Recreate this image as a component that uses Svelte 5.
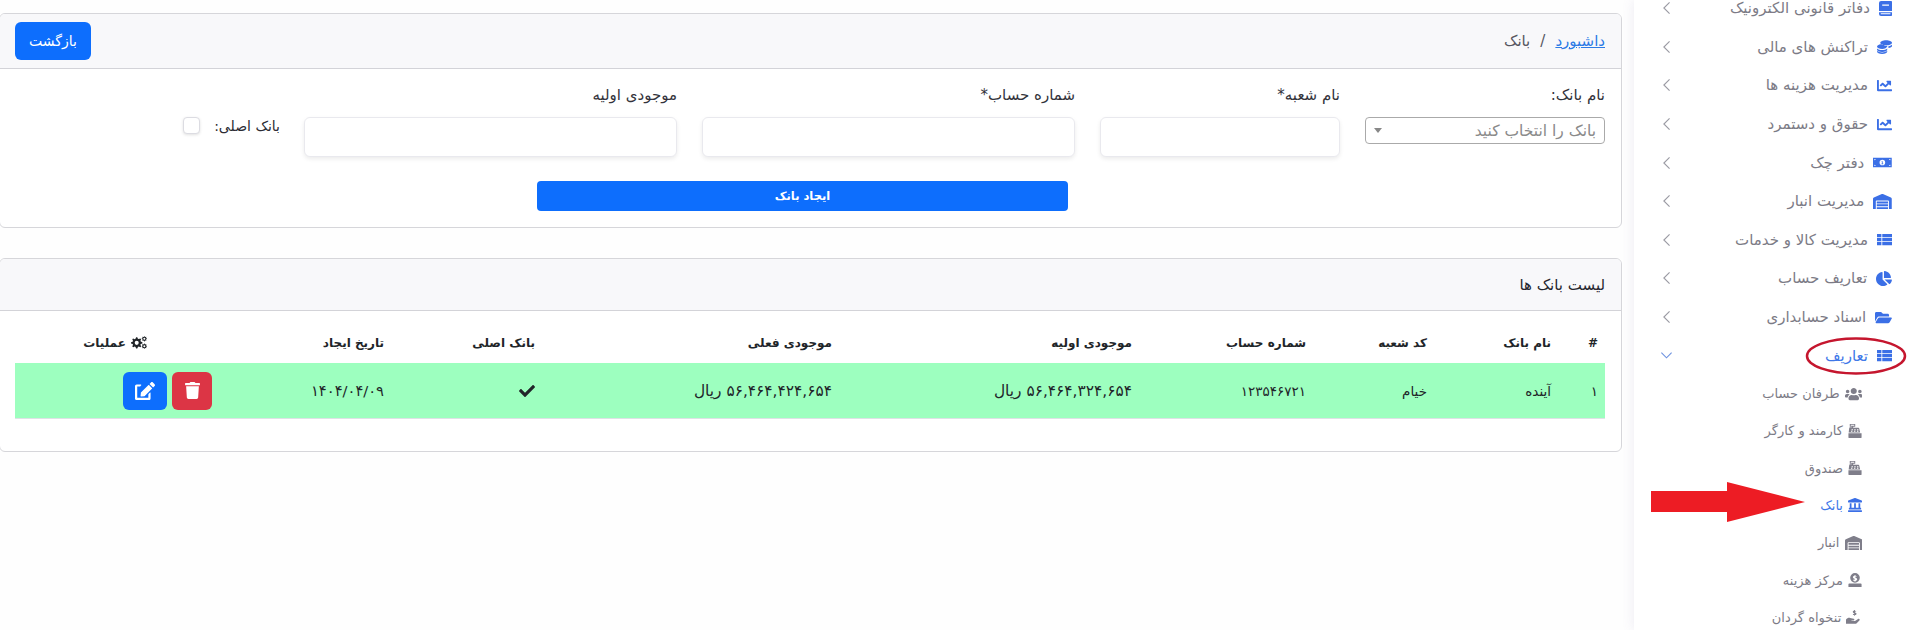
<script>
  const gear = (cx, cy, r, hole) => {
    let d = ''
    const n = 8
    for (let i = 0; i < n * 4; i++) {
      const a = (i / (n * 4)) * Math.PI * 2
      const rad = i % 4 < 2 ? r : r * 0.74
      d += (i ? 'L' : 'M') + (cx + rad * Math.cos(a - 0.1)).toFixed(1) + ' ' + (cy + rad * Math.sin(a - 0.1)).toFixed(1)
    }
    d += `zM${cx - hole} ${cy}a${hole} ${hole} 0 1 0 ${hole * 2} 0a${hole} ${hole} 0 1 0 ${-hole * 2} 0z`
    return d
  }

  const icons = {
    book: ['0 0 448 512', 'M72 0h344a32 32 0 0 1 32 32v448a32 32 0 0 1-32 32H72a72 72 0 0 1-72-72V72A72 72 0 0 1 72 0zM110 120v40h230v-40zM0 340v46h448v-46zM60 420v36h330v-36z'],
    coins: ['0 0 512 512', 'M512 130c0 50-90 90-200 90s-200-40-200-90 90-90 200-90 200 40 200 90zM0 260c0-45 70-82 170-90 40 50 120 76 200 70l-20 8c-10 50-90 92-170 92C80 340 0 305 0 260zM0 320c40 40 110 58 175 58s135-18 175-58v40c0 45-78 82-175 82S0 405 0 360zM0 400c40 40 110 58 175 58s135-18 175-58v30c0 45-78 82-175 82S0 475 0 430zM390 250c50-8 90-24 122-50v40c0 30-50 56-122 66z'],
    chart: ['0 0 512 512', 'M496 384H64V80c0-8.84-7.16-16-16-16H16C7.16 64 0 71.16 0 80v336c0 17.67 14.33 32 32 32h464c8.84 0 16-7.16 16-16v-32c0-8.84-7.16-16-16-16zM464 96H345.94c-21.38 0-32.09 25.85-16.97 40.97l32.4 32.4L288 242.75l-73.37-73.37c-12.5-12.5-32.76-12.5-45.25 0l-68.69 68.69c-6.25 6.25-6.25 16.38 0 22.63l22.62 22.62c6.25 6.25 16.38 6.25 22.63 0L192 237.25l73.37 73.37c12.5 12.5 32.76 12.5 45.25 0l96-96 32.4 32.4c15.12 15.12 40.97 4.41 40.97-16.97V112c0-8.84-7.16-16-16-16z'],
    money: ['0 0 640 512', 'M0 96h640v320H0zM48 140v40a40 40 0 0 0 40-40zM552 140a40 40 0 0 0 40 40v-40zM48 332v40h40a40 40 0 0 0-40-40zM592 332a40 40 0 0 0-40 40h40zM320 160a96 96 0 1 0 0 192 96 96 0 0 0 0-192zM300 210h30v80h20v24h-60v-24h14v-50h-14z'],
    warehouse: ['0 0 640 512', 'M504 352H136.4c-4.4 0-8 3.6-8 8l-.1 48c0 4.4 3.6 8 8 8H504c4.4 0 8-3.6 8-8v-48c0-4.4-3.6-8-8-8zm0 96H136.1c-4.4 0-8 3.6-8 8l-.1 48c0 4.4 3.6 8 8 8h368c4.4 0 8-3.6 8-8v-48c0-4.4-3.6-8-8-8zm0-192H136.6c-4.4 0-8 3.6-8 8l-.1 48c0 4.4 3.6 8 8 8H504c4.4 0 8-3.6 8-8v-48c0-4.4-3.6-8-8-8zm106.5-139L338.4 3.7a48.15 48.15 0 0 0-36.9 0L29.5 117C11.7 124.5 0 141.9 0 161.3V504c0 4.4 3.6 8 8 8h80c4.4 0 8-3.6 8-8V256c0-17.6 14.6-32 32.6-32h382.8c18 0 32.6 14.4 32.6 32v248c0 4.4 3.6 8 8 8h80c4.4 0 8-3.6 8-8V161.3c0-19.4-11.7-36.8-29.5-44.3z'],
    list: ['0 0 512 512', 'M0 64h150v110H0zM180 64h332v110H180zM0 200h150v112H0zM180 200h332v112H180zM0 338h150v110H0zM180 338h332v110H180z'],
    pie: ['0 0 544 512', 'M527.79 288H290.5l158.03 158.03c6.04 6.04 15.98 6.53 22.19 .68 38.7-36.46 65.32-85.61 73.13-140.86 1.34-9.46-6.51-17.85-16.06-17.85zm-15.83-64.8C503.72 103.74 408.26 8.28 288.8.04 279.68-.59 272 7.1 272 16.24V240h223.77c9.14 0 16.82-7.68 16.19-16.8zM224 288V50.71c0-9.55-8.39-17.4-17.84-16.06C86.99 51.49-4.1 155.6.14 280.37 4.5 408.51 114.83 513.59 243.03 511.98c50.4-.63 96.97-16.87 135.26-44.03 7.9-5.6 8.42-17.23 1.57-24.08L224 288z'],
    folder: ['0 0 576 512', 'M572.694 292.093L500.27 416.248A63.997 63.997 0 0 1 444.989 448H45.025c-18.523 0-30.064-20.093-20.731-36.093l72.424-124.155A64 64 0 0 1 152 256h399.964c18.523 0 30.064 20.093 20.73 36.093zM152 224h328v-48c0-26.51-21.49-48-48-48H272l-64-64H48C21.49 64 0 85.49 0 112v278.046l69.077-118.418C86.214 242.25 117.989 224 152 224z'],
    users: ['0 0 640 512', 'M96 224c35.3 0 64-28.7 64-64s-28.7-64-64-64-64 28.7-64 64 28.7 64 64 64zm448 0c35.3 0 64-28.7 64-64s-28.7-64-64-64-64 28.7-64 64 28.7 64 64 64zm32 32h-64c-17.6 0-33.5 7.1-45.1 18.6 40.3 22.1 68.9 62 75.1 109.4h66c17.7 0 32-14.3 32-32v-32c0-35.3-28.7-64-64-64zm-256 0c61.9 0 112-50.1 112-112S381.9 32 320 32 208 82.1 208 144s50.1 112 112 112zm76.8 32h-8.3c-20.8 10-43.9 16-68.5 16s-47.6-6-68.5-16h-8.3C179.6 288 128 339.6 128 403.2V432c0 26.5 21.5 48 48 48h288c26.5 0 48-21.5 48-48v-28.8c0-63.6-51.6-115.2-115.2-115.2zm-223.7-13.4C161.5 263.1 145.6 256 128 256H64c-35.3 0-64 28.7-64 64v32c0 17.7 14.3 32 32 32h65.9c6.3-47.4 34.9-87.3 75.2-109.4z'],
    register: ['0 0 512 512', 'M64 0h200v96H190v40h190a32 32 0 0 1 31 26l33 150H24l20-160a32 32 0 0 1 32-30h74V96H64zM100 30v36h130V30zM130 190v36h50v-36zM230 190v36h50v-36zM330 190v36h50v-36zM110 250v36h50v-36zM220 250v36h50v-36zM330 250v36h50v-36zM16 340h480v140a32 32 0 0 1-32 32H48a32 32 0 0 1-32-32z'],
    landmark: ['0 0 512 512', 'M501.62 92.11L267.24 2.04a31.958 31.958 0 0 0-22.47 0L10.38 92.11A16.001 16.001 0 0 0 0 107.09V144c0 8.84 7.16 16 16 16h480c8.84 0 16-7.16 16-16v-36.91c0-6.67-4.14-12.64-10.38-14.98zM64 192v160H48c-8.84 0-16 7.16-16 16v48h448v-48c0-8.84-7.16-16-16-16h-16V192h-64v160h-96V192h-64v160h-96V192H64zm432 256H16c-8.84 0-16 7.16-16 16v32c0 8.84 7.16 16 16 16h480c8.84 0 16-7.16 16-16v-32c0-8.84-7.16-16-16-16z'],
    sack: ['0 0 512 512', 'M256 0a176 176 0 1 1 0 352 176 176 0 0 1 0-352zM240 70v26c-40 6-60 30-60 58 0 34 30 50 60 56v46c-14-2-26-8-36-16l-22 26c16 14 36 22 58 24v26h32v-26c42-6 64-30 64-62 0-34-30-50-64-58v-42c10 2 20 6 28 12l20-26c-14-10-30-16-48-18V70zM48 380h416a32 32 0 0 1 32 32v100H16V412a32 32 0 0 1 32-32z'],
    hand: ['0 0 576 512', 'M300 0h30v24c18 2 34 8 46 18l-18 24c-10-8-20-12-28-12v34c34 8 54 22 54 50 0 26-20 44-54 48v24h-30v-24c-20-2-38-10-52-22l20-24c10 8 20 14 32 16v-38c-30-8-52-22-52-50 0-26 20-44 52-48zM0 350c40-50 90-70 150-60l130 30c40 10 30 60-10 60h-70v20h130l110-70c40-26 80 14 50 50l-100 100c-14 14-30 22-50 22H0z'],
    check: ['0 0 512 512', 'M173.898 439.404l-166.4-166.4c-9.997-9.997-9.997-26.206 0-36.204l36.203-36.204c9.997-9.998 26.207-9.998 36.204 0L192 312.69 432.095 72.596c9.997-9.997 26.207-9.997 36.204 0l36.203 36.204c9.997 9.997 9.997 26.206 0 36.204l-294.4 294.401c-9.998 9.997-26.207 9.997-36.204-.001z'],
    trash: ['0 0 448 512', 'M432 32H312l-9.4-18.7A24 24 0 0 0 281.1 0H166.8a23.72 23.72 0 0 0-21.4 13.3L136 32H16A16 16 0 0 0 0 48v32a16 16 0 0 0 16 16h416a16 16 0 0 0 16-16V48a16 16 0 0 0-16-16zM53.2 467a48 48 0 0 0 47.9 45h245.8a48 48 0 0 0 47.9-45L416 128H32z'],
    edit: ['0 0 576 512', 'M402.6 83.2l90.2 90.2c3.8 3.8 3.8 10 0 13.8L274.4 405.6l-92.8 10.3c-12.4 1.4-22.9-9.1-21.5-21.5l10.3-92.8L388.8 83.2c3.8-3.8 10-3.8 13.8 0zm162-22.9l-48.8-48.8c-15.2-15.2-39.9-15.2-55.2 0l-35.4 35.4c-3.8 3.8-3.8 10 0 13.8l90.2 90.2c3.8 3.8 10 3.8 13.8 0l35.4-35.4c15.2-15.3 15.2-40 0-55.2zM384 346.2V448H64V128h73.9c3.2 0 6.2-1.3 8.5-3.5l32-32c7.6-7.6 2.2-20.5-8.5-20.5H48C21.5 72 0 93.5 0 120v352c0 26.5 21.5 48 48 48h352c26.5 0 48-21.5 48-48V314.2c0-10.7-12.9-16-20.5-8.5l-32 32c-2.2 2.3-3.5 5.3-3.5 8.5z'],
    cogs: ['0 0 640 512', gear(230, 270, 225, 80) + gear(530, 110, 105, 40) + gear(530, 400, 105, 40)]
  }

  const menu = [
    { icon: 'book', label: 'دفاتر قانونی الکترونیک' },
    { icon: 'coins', label: 'تراکنش های مالی' },
    { icon: 'chart', label: 'مدیریت هزینه ها' },
    { icon: 'chart', label: 'حقوق و دستمرد' },
    { icon: 'money', label: 'دفتر چک' },
    { icon: 'warehouse', label: 'مدیریت انبار' },
    { icon: 'list', label: 'مدیریت کالا و خدمات' },
    { icon: 'pie', label: 'تعاریف حساب' },
    { icon: 'folder', label: 'اسناد حسابداری' }
  ]

  const submenu = [
    { icon: 'users', label: 'طرفان حساب' },
    { icon: 'register', label: 'کارمند و کارگر' },
    { icon: 'register', label: 'صندوق' },
    { icon: 'landmark', label: 'بانک', active: true },
    { icon: 'warehouse', label: 'انبار' },
    { icon: 'sack', label: 'مرکز هزینه' },
    { icon: 'hand', label: 'تنخواه گردان' }
  ]

  const heads = ['#', 'نام بانک', 'کد شعبه', 'شماره حساب', 'موجودی اولیه', 'موجودی فعلی', 'بانک اصلی', 'تاریخ ایجاد']
</script>

{#snippet icon(name, cls)}
  <svg class={cls} viewBox={icons[name][0]} aria-hidden="true"><path fill-rule="evenodd" d={icons[name][1]} /></svg>
{/snippet}

<div class="page" dir="rtl">
  <aside class="sidebar">
    <ul class="menu">
      {#each menu as item}
        <li class="item">
          {@render icon(item.icon, 'ico')}
          <span>{item.label}</span>
          <svg class="chev" viewBox="0 0 10 16"><path d="M8.5 1.5 2 8l6.5 6.5" /></svg>
        </li>
      {/each}
      <li class="item open">
        {@render icon('list', 'ico')}
        <span>تعاریف</span>
        <svg class="chev down" viewBox="0 0 14 9"><path d="M1.5 1.5 7 7l5.5-5.5" /></svg>
      </li>
    </ul>
    <ul class="sub">
      {#each submenu as item}
        <li class:active={item.active}>
          {@render icon(item.icon, 'sico')}
          <span>{item.label}</span>
        </li>
      {/each}
    </ul>
  </aside>

  <main class="content">
    <section class="card">
      <header class="card-head">
        <nav class="crumbs"><a href="#top">داشبورد</a><i>/</i><span>بانک</span></nav>
        <button class="btn back">بازگشت</button>
      </header>
      <div class="card-body">
        <div class="form-row">
          <div class="field">
            <label for="bank">نام بانک:</label>
            <div id="bank" class="select"><span>بانک را انتخاب کنید</span><b></b></div>
          </div>
          <div class="field">
            <label for="branch">نام شعبه*</label>
            <input id="branch" type="text" />
          </div>
          <div class="field">
            <label for="account">شماره حساب*</label>
            <input id="account" type="text" />
          </div>
          <div class="field">
            <label for="initial">موجودی اولیه</label>
            <input id="initial" type="text" />
          </div>
          <div class="main-check">
            <span>بانک اصلی:</span>
            <span class="box"></span>
          </div>
        </div>
        <button class="btn create">ایجاد بانک</button>
      </div>
    </section>

    <section class="card list">
      <header class="card-head"><h2>لیست بانک ها</h2></header>
      <div class="table-wrap">
        <table>
          <colgroup>
            <col style="width:47px" /><col style="width:124px" /><col style="width:121px" /><col style="width:174px" />
            <col style="width:300px" /><col style="width:297px" /><col style="width:151px" /><col style="width:171px" /><col />
          </colgroup>
          <thead>
            <tr>
              {#each heads as h}<th>{h}</th>{/each}
              <th class="ops-head">{@render icon('cogs', 'cog')} عملیات</th>
            </tr>
          </thead>
          <tbody>
            <tr>
              <td>۱</td>
              <td>آینده</td>
              <td>خیام</td>
              <td>۱۲۳۵۴۶۷۲۱</td>
              <td class="amount">۵۶,۴۶۴,۳۲۴,۶۵۴ ریال</td>
              <td class="amount">۵۶,۴۶۴,۴۲۴,۶۵۴ ریال</td>
              <td>{@render icon('check', 'check')}</td>
              <td class="date">۱۴۰۴/۰۴/۰۹</td>
              <td class="ops">
                <button class="act red">{@render icon('trash', 'trash')}</button>
                <button class="act blue">{@render icon('edit', 'edit')}</button>
              </td>
            </tr>
          </tbody>
        </table>
      </div>
    </section>
  </main>

  <svg class="ring" viewBox="0 0 102 40"><ellipse cx="51" cy="20" rx="49" ry="17.5" /></svg>
  <svg class="arrow" viewBox="0 0 156 42"><path d="M1 10h76V1l78 20-78 20V31H1z" /></svg>
</div>

<style>
  :global(body) {
    margin: 0;
    background: #fefefe;
    overflow: hidden;
  }

  .page {
    position: relative;
    display: flex;
    width: 1907px;
    height: 630px;
    overflow: hidden;
    font-family: "DejaVu Sans", sans-serif;
    color: #2b2b33;
  }

  .sidebar {
    width: 273px;
    flex: none;
    background: #fff;
    box-shadow: 0 0 12px rgba(110, 90, 160, 0.12);
    color: #7c7b86;
  }

  .menu, .sub {
    list-style: none;
    margin: 0;
    padding: 0;
  }

  .menu {
    margin-top: -11px;
  }

  .item {
    display: flex;
    align-items: center;
    height: 38.6px;
    padding: 0 15px 0 28px;
    font-size: 15px;
    gap: 9px;
  }

  .ico {
    height: 15px;
    width: auto;
    flex: none;
    fill: #3b6fe6;
  }

  .chev {
    width: 9px;
    height: 14px;
    margin-right: auto;
    fill: none;
    stroke: #9a9aa3;
    stroke-width: 1.3;
  }

  .chev.down {
    width: 13px;
    height: 9px;
    margin-left: -2px;
    stroke-width: 1.2;
  }

  .open {
    color: #3f78e8;
  }

  .open .chev {
    stroke: #6f93e0;
  }

  .sub li {
    display: flex;
    align-items: center;
    height: 37.3px;
    padding-right: 45px;
    font-size: 13px;
    gap: 5px;
  }

  .sub .active {
    color: #3f78e8;
  }

  .sico {
    height: 14px;
    width: auto;
    flex: none;
    fill: #7f7e8a;
  }

  .active .sico {
    fill: #3b6fe6;
  }

  .content {
    flex: 1;
    padding: 13px 12px 0 0;
    margin-left: -1px;
    min-width: 0;
  }

  .card {
    border: 1px solid #d6d6da;
    border-radius: 6px;
    background: #fff;
    overflow: hidden;
  }

  .card-head {
    display: flex;
    align-items: center;
    justify-content: space-between;
    height: 54px;
    padding: 0 16px 0 15px;
    background: #f8f8fa;
    border-bottom: 1px solid #d3d3d8;
  }

  .crumbs {
    font-size: 15px;
    color: #565660;
    display: flex;
    gap: 10px;
  }

  .crumbs a {
    color: #2c7be5;
  }

  .crumbs i {
    font-style: normal;
  }

  .btn {
    border: 0;
    background: #0d6efd;
    color: #fff;
    font-family: inherit;
    border-radius: 6px;
  }

  .back {
    width: 76px;
    height: 38px;
    font-size: 14px;
  }

  .card-body {
    padding: 16px 16px 15px;
    height: 158px;
    box-sizing: border-box;
  }

  .form-row {
    display: grid;
    grid-template-columns: 240px 240px 373px 373px 1fr;
    column-gap: 25px;
    align-items: start;
  }

  .field {
    display: flex;
    flex-direction: column;
    gap: 12px;
  }

  label {
    height: 20px;
    font-size: 15px;
    line-height: 20px;
    color: #33333b;
  }

  input {
    box-sizing: border-box;
    height: 40px;
    width: 100%;
    border: 1px solid #e9e9ee;
    border-radius: 6px;
    background: #fff;
    box-shadow: 0 2px 4px rgba(0, 0, 0, 0.08);
  }

  .select {
    box-sizing: border-box;
    display: flex;
    align-items: center;
    justify-content: space-between;
    height: 27px;
    padding: 0 8px;
    border: 1px solid #aaa;
    border-radius: 4px;
    font-size: 15.5px;
    color: #8a8a8a;
  }

  .select b {
    width: 0;
    height: 0;
    border: 4px solid transparent;
    border-top: 5px solid #888;
    border-bottom: 0;
  }

  .main-check {
    display: flex;
    align-items: flex-start;
    gap: 14px;
    padding-top: 32px;
    margin-right: -1px;
    font-size: 14px;
    line-height: 18px;
  }

  .box {
    width: 15px;
    height: 15px;
    border: 1px solid #dcdce2;
    border-radius: 4px;
    background: #fff;
    box-shadow: 0 1px 3px rgba(0, 0, 0, 0.12);
  }

  .create {
    display: block;
    width: 531px;
    height: 30px;
    margin-top: 24px;
    margin-right: 537px;
    font-size: 11.5px;
    font-weight: 700;
    border-radius: 4px;
  }

  .list {
    margin-top: 30px;
  }

  .list .card-head {
    height: 51px;
  }

  h2 {
    margin: 0;
    font-size: 15px;
    font-weight: 400;
    color: #26262e;
  }

  .table-wrap {
    padding: 11px 16px 32px 15px;
  }

  table {
    width: 100%;
    table-layout: fixed;
    border-collapse: collapse;
  }

  th {
    height: 41px;
    padding: 0 7px;
    font-size: 12px;
    font-weight: 700;
    text-align: right;
    color: #212529;
  }

  .ops-head {
    padding-right: 72px;
  }

  .cog {
    width: 18px;
    height: 13px;
    fill: #212529;
    vertical-align: -2px;
  }

  tbody tr {
    background: #9dffbf;
    border-bottom: 1px solid #dee2e6;
  }

  td {
    height: 55px;
    padding: 0 7px;
    font-size: 13.5px;
    color: #212529;
    text-align: right;
  }

  td.amount {
    font-size: 15.4px;
  }

  td.date {
    font-size: 14.7px;
  }

  .check {
    width: 16px;
    height: 16px;
    fill: #212529;
    display: block;
  }

  .ops {
    padding-right: 8px;
  }

  .act {
    width: 40px;
    height: 38px;
    border: 0;
    border-radius: 6px;
    padding: 0;
    vertical-align: middle;
    fill: #fff;
  }

  .act svg {
    display: inline-block;
    vertical-align: middle;
  }

  .red {
    background: #dc3545;
  }

  .blue {
    width: 44px;
    margin-right: 1px;
    background: #0d6efd;
  }

  .trash {
    width: 15px;
    height: 17px;
  }

  .edit {
    width: 20px;
    height: 18px;
  }

  .ring {
    position: absolute;
    left: 1805px;
    top: 336px;
    width: 102px;
    height: 40px;
    fill: none;
    stroke: #c5162e;
    stroke-width: 2.5;
  }

  .arrow {
    position: absolute;
    left: 1650px;
    top: 481px;
    width: 156px;
    height: 42px;
    fill: #ed1c24;
  }
</style>
